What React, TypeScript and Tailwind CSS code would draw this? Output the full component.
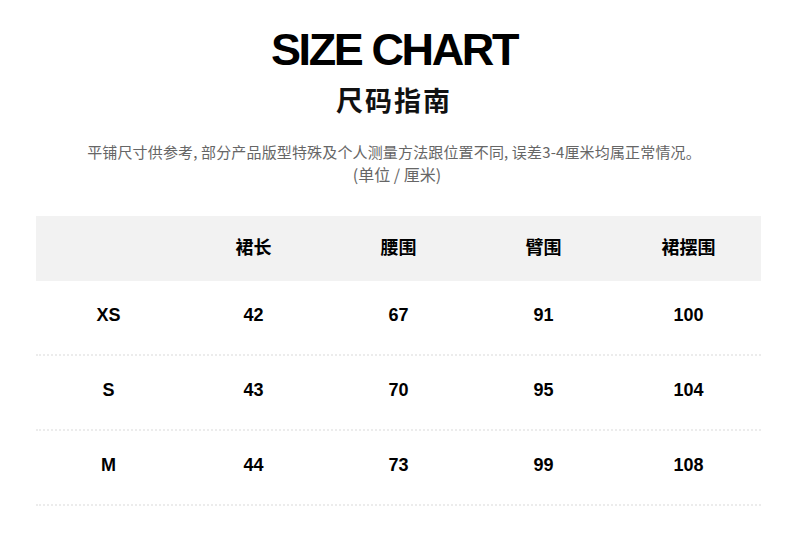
import React from "react";

const headers = ["", "裙长", "腰围", "臂围", "裙摆围"];
const rows = [
  ["XS", "42", "67", "91", "100"],
  ["S", "43", "70", "95", "104"],
  ["M", "44", "73", "99", "108"],
];

export default function App() {
  return (
    <div
      className="w-[800px] h-[539px] bg-white flex flex-col overflow-hidden"
      style={{ fontFamily: '"Liberation Sans", "Noto Sans CJK SC", sans-serif' }}
    >
      <div className="flex flex-col items-center w-[788px]">
        <h1 className="mt-[23px] text-[45px] leading-[54px] font-bold tracking-[-2.4px] text-black">
          SIZE CHART
        </h1>
        <h2 className="mt-[8px] text-[27px] leading-[34px] font-bold tracking-[2px] text-[#111]">
          尺码指南
        </h2>
        <div
          className="mt-[21px] flex flex-col items-center text-[15px] leading-[23px] text-[#666]"
          style={{ fontFamily: '"Noto Sans CJK SC", sans-serif' }}
        >
          <p className="tracking-[0.15px]">
            平铺尺寸供参考, 部分产品版型特殊及个人测量方法跟位置不同, 误差3-4厘米均属正常情况。
          </p>
          <p className="text-[16px] ml-[6px]">(单位 / 厘米)</p>
        </div>
      </div>
      <div className="mt-[30px] ml-[36px] w-[725px] flex flex-col">
        <div className="grid grid-cols-5 h-[65px] bg-[#f2f2f2] items-center">
          {headers.map((h, i) => (
            <div key={i} className="text-center text-[18px] font-bold text-black">
              {h}
            </div>
          ))}
        </div>
        {rows.map((r, ri) => (
          <div
            key={ri}
            className="grid grid-cols-5 h-[75px] items-center border-b-2 border-dotted border-[#ececec]"
          >
            {r.map((c, ci) => (
              <div key={ci} className="text-center text-[18px] font-bold text-black pb-[4px]">
                {c}
              </div>
            ))}
          </div>
        ))}
      </div>
    </div>
  );
}
